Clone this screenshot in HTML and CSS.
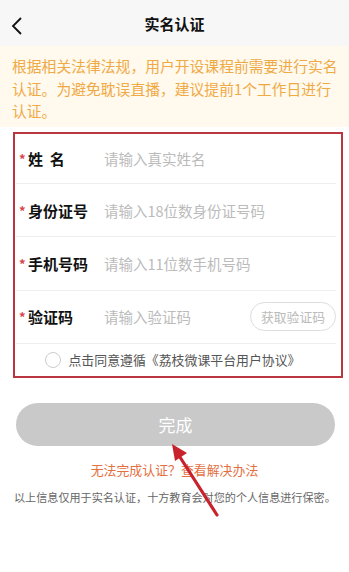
FILE: index.html
```html
<!DOCTYPE html>
<html>
<head>
    <meta charset="utf-8" />
    <link rel="stylesheet" href="styles.css">
</head>
<body>
    <div class="topbar">
        <svg class="back" width="12" height="20" viewBox="0 0 12 20">
            <path d="M10 2 L2 10 L10 18" fill="none" stroke="#111" stroke-width="1.8" />
        </svg>
        <span class="title">实名认证</span>
    </div>
    <div class="notice">根据相关法律法规，用户开设课程前需要进行实名认证。为避免耽误直播，建议提前1个工作日进行认证。</div>

    <div class="mark">
        <div class="row first">
            <span class="star">*</span>
            <span class="label">姓&nbsp;&nbsp;名</span>
            <span class="hint">请输入真实姓名</span>
        </div>
        <div class="row">
            <span class="star">*</span>
            <span class="label">身份证号</span>
            <span class="hint">请输入18位数身份证号码</span>
        </div>
        <div class="row">
            <span class="star">*</span>
            <span class="label">手机号码</span>
            <span class="hint">请输入11位数手机号码</span>
        </div>
        <div class="row">
            <span class="star">*</span>
            <span class="label">验证码</span>
            <span class="hint">请输入验证码</span>
            <span class="getcode">获取验证码</span>
        </div>
        <div class="agree">
            <span class="circle"></span>
            <span>点击同意遵循《荔枝微课平台用户协议》</span>
        </div>
    </div>

    <div class="done">完成</div>
    <div class="help">无法完成认证？查看解决办法</div>
    <div class="foot">以上信息仅用于实名认证，十方教育会对您的个人信息进行保密。</div>

    <svg class="arrow" width="349" height="572" viewBox="0 0 349 572">
        <line x1="217" y1="515" x2="178" y2="454" stroke="#c8232c" stroke-width="3.2" stroke-linecap="round" />
        <polygon points="172,444 187,453 175,461" fill="#c8232c" />
    </svg>
</body>
</html>
```

FILE: styles.css
```css
body {
    margin: 0;
    background: #ffffff;
    font-family: "Noto Sans CJK SC", "Noto Sans", sans-serif;
    position: relative;
    width: 349px;
    height: 572px;
    overflow: hidden;
}

.topbar {
    height: 46px;
    background: #f7f7f7;
    display: flex;
    align-items: center;
    justify-content: center;
    position: relative;
}

.back {
    position: absolute;
    left: 11px;
    top: 16px;
}

.title {
    font-size: 15px;
    font-weight: bold;
    color: #111;
}

.notice {
    background: #fff9ee;
    color: #f0aa45;
    font-size: 14.8px;
    line-height: 22.5px;
    padding: 9px 8px 5px 12px;
    height: 67px;
}

.mark {
    margin: 5px 6px 0 13px;
    border: 2px solid #b9353f;
    background: #ffffff;
}

.row {
    height: 53.3px;
    box-sizing: border-box;
    margin: 0 5px 0 1px;
    border-bottom: 1px solid #eeeeee;
    display: flex;
    align-items: center;
}

.row.first {
    height: 50px;
}

.star {
    color: #d9434a;
    font-size: 13px;
    font-weight: bold;
    width: 12px;
    padding-left: 3px;
    box-sizing: border-box;
}

.label {
    width: 76px;
    font-size: 15px;
    font-weight: bold;
    color: #111;
}

.hint {
    flex: 1;
    font-size: 14.5px;
    color: #bbbbbb;
}

.getcode {
    border: 1px solid #dddddd;
    border-radius: 15px;
    height: 27px;
    line-height: 27px;
    padding: 0 10px;
    font-size: 12.8px;
    color: #bbbbbb;
}

.agree {
    height: 32px;
    display: flex;
    align-items: center;
    justify-content: center;
    font-size: 12.9px;
    color: #555555;
    padding-right: 10px;
}

.circle {
    width: 14px;
    height: 14px;
    border: 1px solid #cccccc;
    border-radius: 50%;
    margin-right: 7px;
}

.done {
    margin: 25px 14px 0 16px;
    height: 43px;
    border-radius: 22px;
    background: #c9c9c9;
    color: #ffffff;
    font-size: 17px;
    display: flex;
    align-items: center;
    justify-content: center;
}

.help {
    margin-top: 14px;
    text-align: center;
    font-size: 12.9px;
    color: #e4703f;
    line-height: 20px;
}

.foot {
    margin-top: 9px;
    padding-left: 14px;
    font-size: 11.1px;
    color: #666666;
    line-height: 16px;
}

.arrow {
    position: absolute;
    left: 0;
    top: 0;
    pointer-events: none;
}
```
